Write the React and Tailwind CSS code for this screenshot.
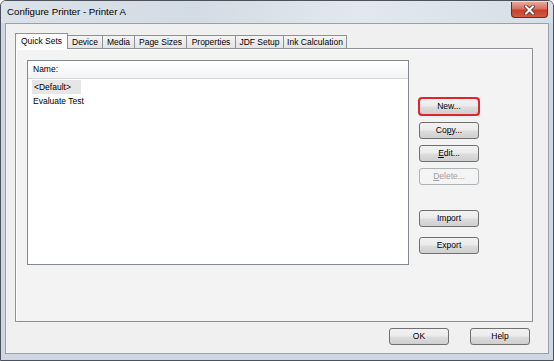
const TABS = [
  { label: 'Quick Sets', w: 53, active: true },
  { label: 'Device', w: 36 },
  { label: 'Media', w: 33 },
  { label: 'Page Sizes', w: 53 },
  { label: 'Properties', w: 50 },
  { label: 'JDF Setup', w: 49 },
  { label: 'Ink Calculation', w: 64 },
];

const btnBase =
  'h-[17px] w-[60px] flex items-center justify-center rounded-[3px] border text-[8.5px] leading-none';
const btnOn =
  'border-[#707070] text-black bg-[linear-gradient(#f2f2f2_0%,#ebebeb_48%,#dddddd_52%,#cfcfcf_100%)]';
const btnOff = 'border-[#adb2b5] text-[#a0a0a0] bg-[#f4f4f4]';

function Btn({ children, className = '', disabled }) {
  return (
    <div className={`${btnBase} ${disabled ? btnOff : btnOn} ${className}`}>
      {children}
    </div>
  );
}

function CloseButton() {
  return (
    <div className="mt-[1px] h-[16px] w-[37px] flex items-center justify-center rounded-b-[4px] border border-t-0 border-[#6e2a22] bg-[linear-gradient(#e8a99c_0%,#d8705e_45%,#c6412c_55%,#d35a42_100%)]">
      <svg width="11" height="10" viewBox="0 0 11 10">
        <path d="M2 1.5 L9 8.5 M9 1.5 L2 8.5" stroke="#5a2a24" strokeWidth="3.6" strokeLinecap="square" />
        <path d="M2 1.5 L9 8.5 M9 1.5 L2 8.5" stroke="#ffffff" strokeWidth="2" strokeLinecap="square" />
      </svg>
    </div>
  );
}

export default function App() {
  return (
    <div className="w-[554px] h-[361px] flex flex-col overflow-hidden rounded-t-[6px] border border-[#4b525b] bg-[#cfd8e2] font-['Liberation_Sans',Arial,sans-serif] text-black">
      {/* title bar */}
      <div className="h-[22px] shrink-0 flex items-start justify-between pl-[6px] pr-[5px] bg-[linear-gradient(90deg,#dbe2ea_0%,#d3dbe4_35%,#e3e8ee_65%,#d6dee7_100%)]">
        <span className="mt-[5px] text-[9.7px] leading-[12px]">Configure Printer - Printer A</span>
        <CloseButton />
      </div>

      {/* client area */}
      <div className="flex-1 mx-[4px] mb-[6px] flex flex-col border border-[#98a2ad] bg-[#f0f0f0]">
        <div className="pl-[9px] pr-[15px] pt-[9px] flex flex-col">
          {/* tabs */}
          <div className="h-[15px] flex items-end relative z-10">
            {TABS.map((t, i) => (
              <div
                key={t.label}
                style={{ width: t.w }}
                className={`${i > 0 ? '-ml-px' : ''} flex items-center justify-center text-[8.5px] leading-none border border-b-0 border-[#8d9095] ${
                  t.active
                    ? 'h-[16px] -mb-px bg-white relative z-10'
                    : 'h-[13px] bg-[linear-gradient(#f4f4f4,#e4e4e4)]'
                }`}
              >
                {t.label}
              </div>
            ))}
          </div>

          {/* panel */}
          <div className="h-[274px] flex border border-[#8d9095] bg-[#f3f3f3] shadow-[inset_1px_1px_0_#ffffff]">
            <div className="ml-[11px] mt-[11px] w-[382px] h-[205px] flex flex-col border border-[#828790] bg-white">
              <div className="h-[18px] flex items-center pl-[5px] text-[8.5px] border-b border-[#d5d5d5] bg-[linear-gradient(#ffffff,#f3f4f6)]">
                Name:
              </div>
              <div className="pt-[1px] pl-[4px] flex flex-col items-start text-[8.5px]">
                <div className="h-[14px] w-[49px] pl-[2px] flex items-center bg-[#e6e6e6]">&lt;Default&gt;</div>
                <div className="h-[14px] pl-[1px] flex items-center">Evaluate Test</div>
              </div>
            </div>

            <div className="ml-[10px] mt-[49px] flex flex-col">
              <Btn className="outline-2 outline-[#e2232c] outline-offset-[-1px] border-[#3c7fb1]">New...</Btn>
              <Btn className="mt-[7px]">
                <span>Co<u>p</u>y...</span>
              </Btn>
              <Btn className="mt-[6px]">
                <span><u>E</u>dit...</span>
              </Btn>
              <Btn className="mt-[6px]" disabled>
                <span><u>D</u>elete...</span>
              </Btn>
              <Btn className="mt-[25px]">Import</Btn>
              <Btn className="mt-[10px]">Export</Btn>
            </div>
          </div>
        </div>

        {/* bottom buttons */}
        <div className="mt-[6px] flex justify-end gap-[21px] pr-[18px]">
          <Btn className="w-[58px]">OK</Btn>
          <Btn className="w-[58px]">Help</Btn>
        </div>
      </div>
    </div>
  );
}
